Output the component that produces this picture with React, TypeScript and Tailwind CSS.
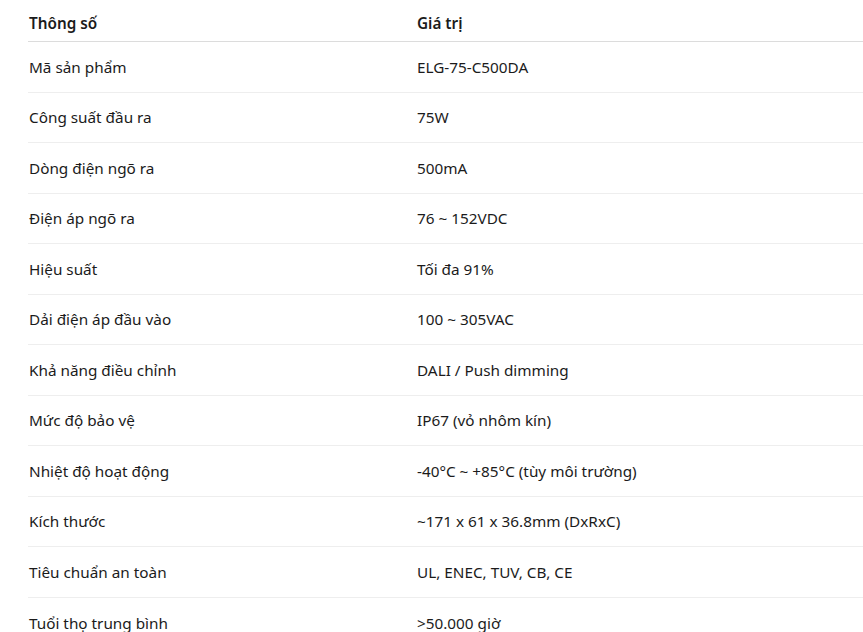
const specs: [string, string][] = [
  ['Mã sản phẩm', 'ELG-75-C500DA'],
  ['Công suất đầu ra', '75W'],
  ['Dòng điện ngõ ra', '500mA'],
  ['Điện áp ngõ ra', '76 ~ 152VDC'],
  ['Hiệu suất', 'Tối đa 91%'],
  ['Dải điện áp đầu vào', '100 ~ 305VAC'],
  ['Khả năng điều chỉnh', 'DALI / Push dimming'],
  ['Mức độ bảo vệ', 'IP67 (vỏ nhôm kín)'],
  ['Nhiệt độ hoạt động', '-40°C ~ +85°C (tùy môi trường)'],
  ['Kích thước', '~171 x 61 x 36.8mm (DxRxC)'],
  ['Tiêu chuẩn an toàn', 'UL, ENEC, TUV, CB, CE'],
  ['Tuổi thọ trung bình', '>50.000 giờ'],
];

export default function App() {
  return (
    <div className="min-h-screen bg-white pl-[28px] font-['Noto_Sans','Open_Sans',sans-serif] text-[15.3px] text-[#1b1b1b]">
      {/* Header */}
      <div className="grid grid-cols-[389px_1fr] border-b border-[#dcdcdc] pt-[11px] pb-[6px] leading-6 font-semibold">
        <div className="pl-px">Thông số</div>
        <div>Giá trị</div>
      </div>

      {specs.map(([label, value], i) => (
        <div
          key={label}
          className={`grid h-[50.5px] grid-cols-[389px_1fr] items-center leading-6 ${i < specs.length - 1 ? 'border-b border-[#eeeeee]' : ''}`}
        >
          <div className="pl-px">{label}</div>
          <div>{value}</div>
        </div>
      ))}
    </div>
  );
}
